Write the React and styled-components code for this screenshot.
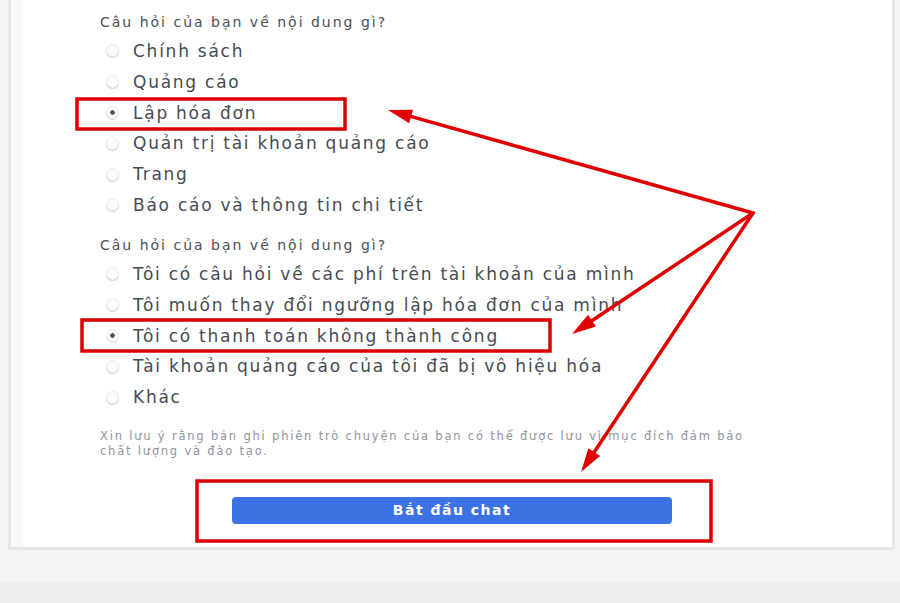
import React from 'react'
import styled, { createGlobalStyle } from 'styled-components'

const GlobalStyle = createGlobalStyle`
    html, body {
        margin: 0;
        padding: 0;
        background: #f4f4f4;
    }
    * {
        box-sizing: border-box;
    }
`;

const groups = [
    {
        title: 'Câu hỏi của bạn về nội dung gì?',
        options: [
            'Chính sách',
            'Quảng cáo',
            'Lập hóa đơn',
            'Quản trị tài khoản quảng cáo',
            'Trang',
            'Báo cáo và thông tin chi tiết',
        ],
        checked: 2,
    },
    {
        title: 'Câu hỏi của bạn về nội dung gì?',
        options: [
            'Tôi có câu hỏi về các phí trên tài khoản của mình',
            'Tôi muốn thay đổi ngưỡng lập hóa đơn của mình',
            'Tôi có thanh toán không thành công',
            'Tài khoản quảng cáo của tôi đã bị vô hiệu hóa',
            'Khác',
        ],
        checked: 2,
    },
];

// red annotation boxes and arrows drawn over the screenshot
const boxes = [
    { x: 77, y: 99, w: 268, h: 30 },
    { x: 82, y: 320, w: 468, h: 31 },
    { x: 197, y: 481, w: 514, h: 60 },
];

const apex = [753, 213];
const tips = [[388, 110], [572, 334], [581, 472]];

const arrowHead = ([x1, y1], [x2, y2], len = 24, half = 7) => {
    const dx = x2 - x1;
    const dy = y2 - y1;
    const d = Math.hypot(dx, dy);
    const ux = dx / d;
    const uy = dy / d;
    const bx = x2 - ux * len;
    const by = y2 - uy * len;
    return `${x2},${y2} ${bx - uy * half},${by + ux * half} ${bx + uy * half},${by - ux * half}`;
};

const shorten = ([x1, y1], [x2, y2], by) => {
    const d = Math.hypot(x2 - x1, y2 - y1);
    return [x2 - (x2 - x1) / d * by, y2 - (y2 - y1) / d * by];
};

const App = () => {
    return (
        <Page>
            <GlobalStyle />
            <Card>
                {groups.map((group, g) => (
                    <Group key={g}>
                        <Question>{group.title}</Question>
                        <OptionList>
                            {group.options.map((option, i) => (
                                <Option key={option}>
                                    <Radio $checked={i === group.checked} />
                                    {option}
                                </Option>
                            ))}
                        </OptionList>
                    </Group>
                ))}

                <Note>
                    Xin lưu ý rằng bản ghi phiên trò chuyện của bạn có thể được lưu vì mục đích đảm bảo chất lượng và đào tạo.
                </Note>

                <ButtonRow>
                    <StartBtn>Bắt đầu chat</StartBtn>
                </ButtonRow>
            </Card>
            <Footer />

            <Overlay width="900" height="603" viewBox="0 0 900 603">
                {boxes.map((b, i) => (
                    <rect key={i} x={b.x} y={b.y} width={b.w} height={b.h} fill="none" stroke="#dc0000" strokeWidth="3.5" />
                ))}
                {tips.map((tip, i) => {
                    const end = shorten(apex, tip, 18);
                    return (
                        <g key={i}>
                            <line x1={apex[0]} y1={apex[1]} x2={end[0]} y2={end[1]} stroke="#e00000" strokeWidth="3.5" strokeLinecap="round" />
                            <polygon points={arrowHead(apex, tip)} fill="#e00000" />
                        </g>
                    )
                })}
            </Overlay>
        </Page>
    )
}

const Page = styled.div`
    position: relative;
    width: 900px;
    height: 603px;
    overflow: hidden;
    display: flex;
    flex-direction: column;
    background: #f4f4f4;
    font-family: "DejaVu Sans", "Liberation Sans", sans-serif;
`;

const Card = styled.div`
    margin: 0 5px 0 8px;
    background: #fff;
    border: 3px solid #e7e7e7;
    border-top: none;
    border-radius: 0 0 3px 3px;
    box-shadow: inset 12px 0 0 #f9f9f9;
    padding: 12px 0 23px 89px;
    display: flex;
    flex-direction: column;
`;

const Group = styled.div`
    & + & {
        margin-top: 14.6px;
    }
`;

const Question = styled.div`
    height: 20px;
    line-height: 20px;
    font-size: 14px;
    letter-spacing: 2px;
    color: #4b4f56;
`;

const OptionList = styled.div`
    margin-top: 3.6px;
    display: flex;
    flex-direction: column;
`;

const Option = styled.div`
    height: 30.8px;
    display: flex;
    align-items: center;
    gap: 14px;
    padding-left: 6px;
    font-size: 17px;
    letter-spacing: 1.75px;
    color: #474b52;
    white-space: nowrap;
`;

const Radio = styled.span`
    width: 13px;
    height: 13px;
    flex: none;
    border-radius: 50%;
    background: ${p => p.$checked ? 'radial-gradient(circle, #555 0 2px, #fafafa 2.6px)' : '#fbfbfb'};
    border: 1px solid #ececec;
    box-shadow: 0 1px 1px rgba(0, 0, 0, .18);
`;

const Note = styled.p`
    margin: 16px 0 0;
    width: 680px;
    font-size: 11.5px;
    line-height: 15px;
    letter-spacing: 1.8px;
    color: #90949c;
`;

const ButtonRow = styled.div`
    margin-top: 38px;
    padding-left: 132px;
    display: flex;
`;

const StartBtn = styled.button`
    width: 440px;
    height: 27px;
    border: none;
    border-radius: 4px;
    background: #3d72e4;
    color: #fff;
    font-family: "DejaVu Sans", "Liberation Sans", sans-serif;
    font-weight: 700;
    font-size: 14px;
    letter-spacing: 1.5px;
    cursor: pointer;
`;

const Footer = styled.div`
    margin-top: auto;
    height: 20px;
    background: #eeeeee;
`;

const Overlay = styled.svg`
    position: absolute;
    top: 0;
    left: 0;
    pointer-events: none;
`;

export default App
